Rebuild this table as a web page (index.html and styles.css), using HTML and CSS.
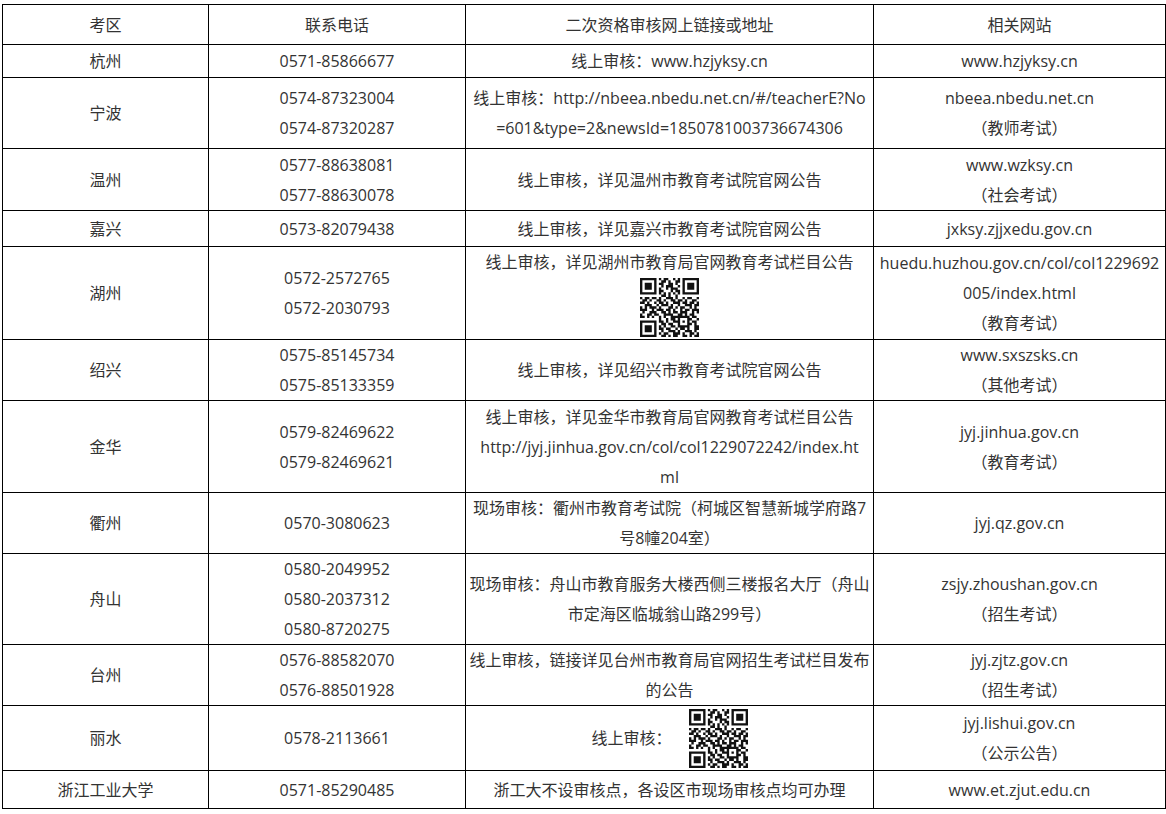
FILE: index.html
```html
<!DOCTYPE html>
<html lang="zh-CN">
<head>
<meta charset="utf-8">
<title>二次资格审核</title>
<link rel="stylesheet" href="styles.css">
</head>
<body>
<svg class="defs" width="0" height="0" aria-hidden="true">
  <symbol id="qr" viewBox="0 0 25 25">
    <path fill="none" stroke="#111" stroke-width="1" d="
M0 .5h7M8 .5h1M10 .5h2M14 .5h1M16 .5h1M18 .5h7
M0 1.5h1M6 1.5h1M9 1.5h2M12 1.5h1M15 1.5h2M18 1.5h1M24 1.5h1
M0 2.5h1M2 2.5h3M6 2.5h1M8 2.5h2M12 2.5h2M15 2.5h1M18 2.5h1M20 2.5h3M24 2.5h1
M0 3.5h1M2 3.5h3M6 3.5h1M9 3.5h1M11 3.5h3M16 3.5h1M18 3.5h1M20 3.5h3M24 3.5h1
M0 4.5h1M2 4.5h3M6 4.5h1M8 4.5h1M11 4.5h1M13 4.5h3M18 4.5h1M20 4.5h3M24 4.5h1
M0 5.5h1M6 5.5h1M8 5.5h2M13 5.5h1M15 5.5h2M18 5.5h1M24 5.5h1
M0 6.5h7M8 6.5h1M10 6.5h1M12 6.5h1M14 6.5h1M16 6.5h1M18 6.5h7
M9 7.5h2M12 7.5h1M15 7.5h1
M0 8.5h1M2 8.5h2M5 8.5h2M8 8.5h1M11 8.5h3M15 8.5h1M18 8.5h1M20 8.5h2M24 8.5h1
M1 9.5h2M4 9.5h1M7 9.5h2M10 9.5h1M13 9.5h2M16 9.5h2M19 9.5h1M22 9.5h2
M0 10.5h2M3 10.5h1M6 10.5h1M8 10.5h2M11 10.5h1M14 10.5h3M18 10.5h2M21 10.5h2M24 10.5h1
M2 11.5h3M7 11.5h1M9 11.5h3M13 11.5h1M16 11.5h1M19 11.5h3M23 11.5h2
M0 12.5h1M2 12.5h1M4 12.5h3M8 12.5h1M12 12.5h2M15 12.5h1M17 12.5h2M21 12.5h1M23 12.5h1
M0 13.5h3M5 13.5h1M7 13.5h3M11 13.5h2M14 13.5h1M17 13.5h1M19 13.5h2M22 13.5h3
M1 14.5h1M4 14.5h3M9 14.5h2M12 14.5h1M14 14.5h2M17 14.5h3M22 14.5h1M24 14.5h1
M0 15.5h1M3 15.5h2M6 15.5h2M10 15.5h4M16 15.5h2M19 15.5h1M21 15.5h2
M0 16.5h2M3 16.5h1M5 16.5h1M8 16.5h1M10 16.5h1M13 16.5h8M22 16.5h2
M8 17.5h1M11 17.5h1M13 17.5h2M16 17.5h1M20 17.5h2M24 17.5h1
M0 18.5h7M8 18.5h2M11 18.5h1M14 18.5h3M18 18.5h1M20 18.5h1M22 18.5h2
M0 19.5h1M6 19.5h1M9 19.5h2M12 19.5h2M16 19.5h1M20 19.5h2M23 19.5h1
M0 20.5h1M2 20.5h3M6 20.5h1M8 20.5h1M10 20.5h1M13 20.5h2M16 20.5h5M23 20.5h2
M0 21.5h1M2 21.5h3M6 21.5h1M8 21.5h2M11 21.5h2M15 21.5h1M17 21.5h2M20 21.5h1M23 21.5h2
M0 22.5h1M2 22.5h3M6 22.5h1M9 22.5h1M12 22.5h3M16 22.5h1M19 22.5h3M23 22.5h1
M0 23.5h1M6 23.5h1M8 23.5h1M10 23.5h2M14 23.5h3M18 23.5h1M21 23.5h2M24 23.5h1
M0 24.5h7M9 24.5h2M12 24.5h1M14 24.5h2M18 24.5h2M21 24.5h1M23 24.5h2"/>
  </symbol>
</svg>

<table class="grid">
  <colgroup>
    <col class="c-area">
    <col class="c-phone">
    <col class="c-link">
    <col class="c-site">
  </colgroup>
  <tr class="h40">
    <td>考区</td>
    <td>联系电话</td>
    <td>二次资格审核网上链接或地址</td>
    <td>相关网站</td>
  </tr>
  <tr class="h33">
    <td>杭州</td>
    <td>0571-85866677</td>
    <td>线上审核：www.hzjyksy.cn</td>
    <td>www.hzjyksy.cn</td>
  </tr>
  <tr class="h71">
    <td>宁波</td>
    <td>0574-87323004<br>0574-87320287</td>
    <td class="nw">线上审核：http://nbeea.nbedu.net.cn/#/teacherE?No<br>=601&amp;type=2&amp;newsId=1850781003736674306</td>
    <td>nbeea.nbedu.net.cn<br>（教师考试）</td>
  </tr>
  <tr class="h62">
    <td>温州</td>
    <td>0577-88638081<br>0577-88630078</td>
    <td>线上审核，详见温州市教育考试院官网公告</td>
    <td>www.wzksy.cn<br>（社会考试）</td>
  </tr>
  <tr class="h36">
    <td>嘉兴</td>
    <td>0573-82079438</td>
    <td>线上审核，详见嘉兴市教育考试院官网公告</td>
    <td>jxksy.zjjxedu.gov.cn</td>
  </tr>
  <tr class="h93">
    <td>湖州</td>
    <td>0572-2572765<br>0572-2030793</td>
    <td class="top">线上审核，详见湖州市教育局官网教育考试栏目公告<svg class="qr qr-block"><use href="#qr"/></svg></td>
    <td class="nw">huedu.huzhou.gov.cn/col/col1229692<br>005/index.html<br>（教育考试）</td>
  </tr>
  <tr class="h61">
    <td>绍兴</td>
    <td>0575-85145734<br>0575-85133359</td>
    <td>线上审核，详见绍兴市教育考试院官网公告</td>
    <td>www.sxszsks.cn<br>（其他考试）</td>
  </tr>
  <tr class="h92">
    <td>金华</td>
    <td>0579-82469622<br>0579-82469621</td>
    <td class="nw">线上审核，详见金华市教育局官网教育考试栏目公告<br>http://jyj.jinhua.gov.cn/col/col1229072242/index.ht<br>ml</td>
    <td>jyj.jinhua.gov.cn<br>（教育考试）</td>
  </tr>
  <tr class="h60">
    <td>衢州</td>
    <td>0570-3080623</td>
    <td class="nw">现场审核：衢州市教育考试院（柯城区智慧新城学府路7<br>号8幢204室）</td>
    <td>jyj.qz.gov.cn</td>
  </tr>
  <tr class="h91">
    <td>舟山</td>
    <td>0580-2049952<br>0580-2037312<br>0580-8720275</td>
    <td class="nw">现场审核：舟山市教育服务大楼西侧三楼报名大厅（舟山<br>市定海区临城翁山路299号）</td>
    <td>zsjy.zhoushan.gov.cn<br>（招生考试）</td>
  </tr>
  <tr class="h61">
    <td>台州</td>
    <td>0576-88582070<br>0576-88501928</td>
    <td class="nw">线上审核，链接详见台州市教育局官网招生考试栏目发布<br>的公告</td>
    <td>jyj.zjtz.gov.cn<br>（招生考试）</td>
  </tr>
  <tr class="h65">
    <td>丽水</td>
    <td>0578-2113661</td>
    <td><span class="inline-qr">线上审核：<svg class="qr"><use href="#qr"/></svg></span></td>
    <td>jyj.lishui.gov.cn<br>（公示公告）</td>
  </tr>
  <tr class="h38">
    <td>浙江工业大学</td>
    <td>0571-85290485</td>
    <td>浙工大不设审核点，各设区市现场审核点均可办理</td>
    <td>www.et.zjut.edu.cn</td>
  </tr>
</table>
</body>
</html>
```

FILE: styles.css
```css
html, body {
  margin: 0;
  padding: 0;
  background: #fff;
}

body {
  font-family: "Open Sans", "Noto Sans CJK SC", sans-serif;
  font-size: 16px;
  color: #333;
}

.defs {
  position: absolute;
  width: 0;
  height: 0;
  overflow: hidden;
}

.grid {
  border-collapse: collapse;
  table-layout: fixed;
  width: 1163px;
  margin: 4px 0 0 2px;
}

.c-area { width: 206px; }
.c-phone { width: 257px; }
.c-link { width: 408px; }
.c-site { width: 292px; }

.grid td {
  border: 1px solid #000;
  padding: 0;
  text-align: center;
  vertical-align: middle;
  line-height: 30px;
}

.grid td.nw {
  white-space: nowrap;
}

.grid td.top {
  vertical-align: top;
}

.h33 { height: 33px; }
.h36 { height: 36px; }
.h38 { height: 38px; }
.h40 { height: 40px; }
.h60 { height: 60px; }
.h61 { height: 61px; }
.h62 { height: 62px; }
.h65 { height: 65px; }
.h71 { height: 71px; }
.h91 { height: 91px; }
.h92 { height: 92px; }
.h93 { height: 93px; }

.qr {
  width: 59px;
  height: 59px;
}

.qr-block {
  display: block;
  margin: 1px auto 0;
}

.inline-qr {
  display: inline-flex;
  align-items: center;
  gap: 17px;
  vertical-align: middle;
}
```
